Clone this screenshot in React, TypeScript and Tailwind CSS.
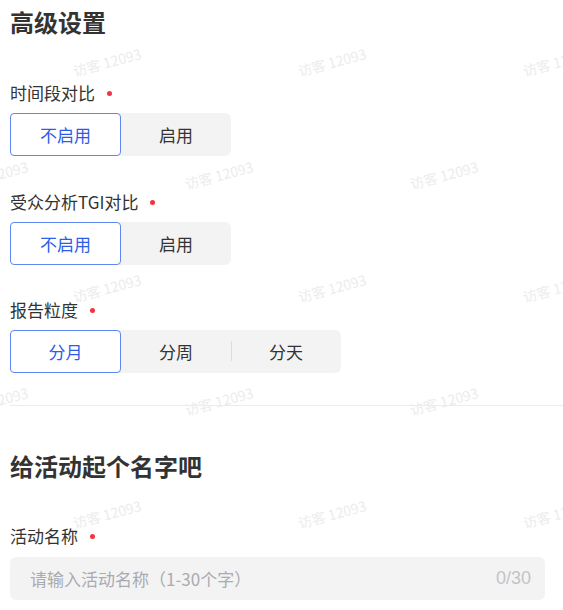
import { useState } from "react"

const font = "font-['Noto_Sans_CJK_SC','Noto_Sans',sans-serif]"

const RequiredLabel = ({ text, className }: { text: string; className: string }) => {
    return (
        <div className={`flex items-center h-6 text-[17px] leading-6 text-[#333] ${className}`}>
            <span>{text}</span>
            <span className="ml-[12px] w-[5px] h-[5px] rounded-full bg-[#f5333f]" />
        </div>
    )
}

const Segmented = ({ options, value, onChange }: { options: string[]; value: number; onChange: (i: number) => void }) => {
    return (
        <div className="flex w-fit h-[43px] rounded-[6px] bg-[#f3f3f4] mt-2">
            {options.map((opt, i) => {
                const active = i === value
                const showDivider = i > 0 && i - 1 !== value && i !== value
                return (
                    <div key={opt} className="relative flex">
                        {showDivider && <span className="absolute left-0 top-[11px] w-px h-[20px] bg-[#dcdcdc]" />}
                        <button
                            onClick={() => onChange(i)}
                            className={
                                active
                                    ? "w-[111px] h-[43px] rounded-[4px] border border-[#5f86f2] bg-white text-[#2d5ce8] text-[17px]"
                                    : "w-[110px] h-[43px] text-[#333] text-[17px]"
                            }>
                            {opt}
                        </button>
                    </div>
                )
            })}
        </div>
    )
}

const Watermarks = () => {
    const rows = [62, 175, 288, 401, 514]
    const marks: { x: number; y: number }[] = []
    rows.forEach((y, r) => {
        const xs = r % 2 === 0 ? [107, 332, 557] : [-6, 219, 444]
        xs.forEach((x) => marks.push({ x, y }))
    })
    return (
        <div className="pointer-events-none absolute inset-0 overflow-hidden">
            {marks.map((m, i) => (
                <span
                    key={i}
                    className="absolute whitespace-nowrap text-[14px] leading-4 text-[#ececec] -translate-x-1/2 -translate-y-1/2 -rotate-[15deg]"
                    style={{ left: m.x, top: m.y }}>
                    访客 12093
                </span>
            ))}
        </div>
    )
}

function App() {
    const [period, setPeriod] = useState(0)
    const [tgi, setTgi] = useState(0)
    const [grain, setGrain] = useState(0)
    const [name, setName] = useState("")

    return (
        <div className={`relative w-[563px] h-[610px] overflow-hidden bg-white pl-[10px] pt-[6px] ${font}`}>
            <h2 className="text-[24px] leading-8 font-bold text-[#333]">高级设置</h2>

            <RequiredLabel text="时间段对比" className="mt-[43px]" />
            <Segmented options={["不启用", "启用"]} value={period} onChange={setPeriod} />

            <RequiredLabel text="受众分析TGI对比" className="mt-[34px]" />
            <Segmented options={["不启用", "启用"]} value={tgi} onChange={setTgi} />

            <RequiredLabel text="报告粒度" className="mt-[33px]" />
            <Segmented options={["分月", "分周", "分天"]} value={grain} onChange={setGrain} />

            <div className="mt-[32px] h-px bg-[#ececec]" />

            <h2 className="mt-[44px] text-[24px] leading-8 font-bold text-[#333]">给活动起个名字吧</h2>

            <RequiredLabel text="活动名称" className="mt-[42px]" />
            <div className="mt-[9px] flex items-center w-[535px] h-[43px] rounded-[6px] bg-[#f3f3f4] pl-[20px] pr-[14px]">
                <input
                    value={name}
                    maxLength={30}
                    onChange={(e) => setName(e.target.value)}
                    placeholder="请输入活动名称（1-30个字）"
                    className="flex-1 bg-transparent outline-none text-[17px] text-[#333] placeholder:text-[#a9abb0]"
                />
                <span className="text-[18px] text-[#c2c4c8] font-['Liberation_Sans',sans-serif]">{name.length}/30</span>
            </div>

            <Watermarks />
        </div>
    )
}

export default App
